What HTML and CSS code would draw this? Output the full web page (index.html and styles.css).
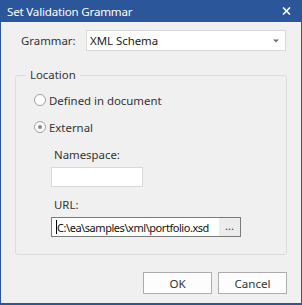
FILE: index.html
```html
<!DOCTYPE html>
<html lang="en">
<head>
  <meta charset="UTF-8" />
  <title>Set Validation Grammar</title>
  <link rel="stylesheet" href="styles.css">
</head>
<body>
  <div class="window">
    <div class="titlebar">
      <span class="title">Set Validation Grammar</span>
      <svg class="close" width="9" height="8" viewBox="0 0 9 8"><path d="M1 0.5 L8 7.5 M8 0.5 L1 7.5" stroke="#fff" stroke-width="1.6"/></svg>
    </div>

    <div class="content">
      <div class="grammar-row">
        <span class="label">Grammar:</span>
        <div class="combo">
          <span>XML Schema</span>
          <svg width="6" height="4" viewBox="0 0 6 4"><path d="M0 0.5 H6 L3 3.5 Z" fill="#707070"/></svg>
        </div>
      </div>

      <fieldset class="group">
        <legend>Location</legend>
        <div class="group-body">
          <label class="radio-row"><span class="radio"></span>Defined in document</label>
          <label class="radio-row"><span class="radio checked"></span>External</label>
          <div class="field">
            <span class="field-label">Namespace:</span>
            <div class="input ns"></div>
          </div>
          <div class="field">
            <span class="field-label">URL:</span>
            <div class="input url">
              <span class="caret"></span><span class="url-text">C:\ea\samples\xml\portfolio.xsd</span>
              <span class="browse">...</span>
            </div>
          </div>
        </div>
      </fieldset>

      <div class="buttons">
        <button>OK</button>
        <button>Cancel</button>
      </div>
    </div>
  </div>
</body>
</html>
```

FILE: styles.css
```css
*{margin:0;padding:0;box-sizing:border-box;}
body{background:#f0f0f0;font-family:'Noto Sans',sans-serif;font-size:11.4px;color:#333;}
.window{width:302px;height:305px;background:#f0f0f0;border:1px solid #2b579a;border-top:0;border-bottom-width:2px;display:flex;flex-direction:column;}
.titlebar{height:22px;background:#2b579a;color:#fff;display:flex;align-items:center;justify-content:space-between;padding:0 11px 0 7px;margin:0 -1px;}
.title{font-size:11.6px;letter-spacing:-0.2px;}
.content{flex:1;display:flex;flex-direction:column;}
.grammar-row{display:flex;align-items:center;margin-top:8px;padding-left:20px;}
.grammar-row .label{width:65px;}
.combo{width:200px;height:21px;background:#fff;border:1px solid #d9d9d9;display:flex;align-items:center;justify-content:space-between;padding:0 6px 0 3px;color:#222;}
.group{margin:16px 14px 0;border:1px solid #dcdcdc;border-radius:3px;padding:0;}
.group legend{margin-left:10px;padding:0 4px;line-height:16px;}
.group-body{display:flex;flex-direction:column;padding:7px 0 17px 18px;}
.radio-row{display:flex;align-items:center;height:20px;margin-bottom:7px;}
.radio{width:12px;height:12px;border:1px solid #a0a0a0;border-radius:50%;background:#fff;margin-right:3px;display:flex;align-items:center;justify-content:center;}
.radio.checked::after{content:"";width:4px;height:4px;border-radius:50%;background:#8a8a8a;}
.field{display:flex;flex-direction:column;padding-left:17px;margin-top:3px;}
.field-label{line-height:16px;padding-left:3px;margin-bottom:4px;}
.field + .field{margin-top:10px;}
.input{background:#fff;border:1px solid #d9d9d9;height:20px;}
.input.ns{width:92px;}
.input.url{width:190px;height:20px;border-color:#7a7a7a;display:flex;align-items:center;padding-left:4px;color:#111;}
.caret{width:1px;height:14px;background:#000;}
.url-text{flex:1;white-space:nowrap;font-size:11px;letter-spacing:-0.45px;}
.browse{width:21px;height:18px;background:#ececec;text-align:center;line-height:16px;color:#444;}
.buttons{display:flex;justify-content:flex-end;gap:6px;margin-top:17px;padding-right:14px;}
.buttons button{width:69px;height:22px;background:#fdfdfd;border:1px solid #adadad;font-family:inherit;font-size:11.6px;color:#333;}
```
